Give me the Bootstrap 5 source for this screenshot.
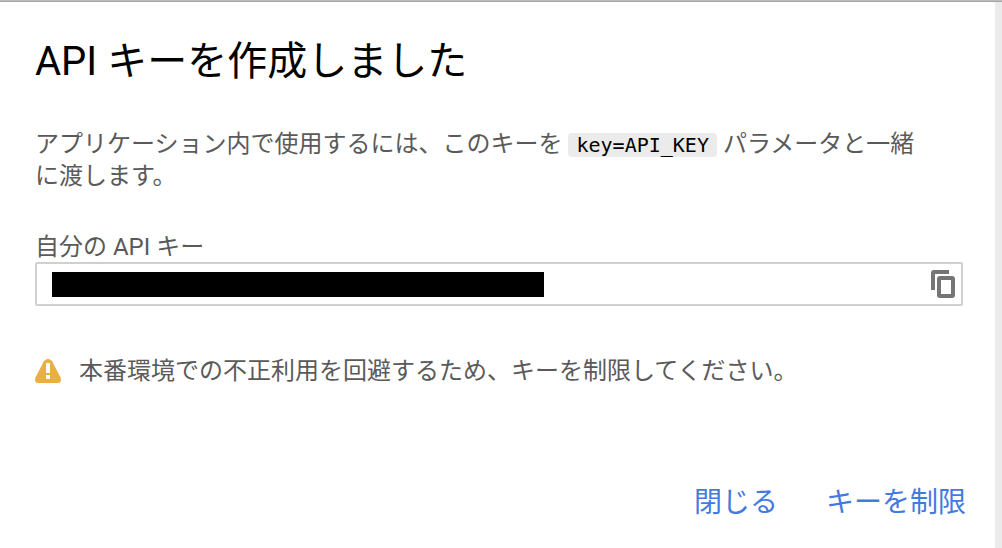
<!DOCTYPE html>
<html lang="ja">
<head>
<meta charset="utf-8">
<meta name="viewport" content="width=device-width, initial-scale=1">
<title>API キーを作成しました</title>
<link href="https://cdn.jsdelivr.net/npm/bootstrap@5.3.0/dist/css/bootstrap.min.css" rel="stylesheet">
<style>
  body { font-family: Roboto, "Noto Sans CJK JP", sans-serif; font-size: 24px; line-height: 32px; color: #5a5a5a; background: #ebebeb; }
  .dialog-page { background: #fff; margin-right: 7px; padding: 36px 29px 24px 35px; }
  .top-rule { height: 2px; background: linear-gradient(#bcbcbc 50%, #a6a6a6 50%); }
  .dialog-title { font-size: 40px; line-height: 48px; font-weight: 400; color: #000; margin-bottom: 42px; }
  .intro { padding-right: 32px; margin-bottom: 40px; }
  .intro code { font-family: "DejaVu Sans Mono", monospace; font-size: 20px; line-height: 24px; color: #000; background: #ebebeb; border-radius: 4px; padding: 0 8px; display: inline-block; }
  .key-label { line-height: 30px; }
  .key-box { border: 2px solid #d0d0d0; border-radius: 2px; height: 44px; padding: 0 4px 0 15px; margin-right: 3px; }
  .key-input { width: 492px; height: 25px; background: #000; color: #000; border-radius: 0; }
  .notice { margin-top: 49px; gap: 18px; }
  .actions { margin-top: 96px; gap: 48px; }
  .actions .btn { font-size: 28px; line-height: 40px; color: #4479e0; }
  .actions .btn:hover { color: #2a5bbf; }
</style>
</head>
<body class="min-vh-100 d-flex flex-column">
<div class="top-rule"></div>
<main class="dialog-page flex-grow-1 d-flex flex-column">
  <h1 class="dialog-title">API キーを作成しました</h1>
  <p class="intro">アプリケーション内で使用するには、このキーを <code>key=API_KEY</code> パラメータと一緒に渡します。</p>
  <label class="key-label" for="api-key">自分の API キー</label>
  <div class="key-box d-flex align-items-center justify-content-between">
    <input id="api-key" class="key-input border-0 p-0" type="text" readonly>
    <button class="btn border-0 p-0 d-flex" type="button" aria-label="コピー">
      <svg width="28" height="32" viewBox="0 0 28 32" fill="none" stroke="#757575" stroke-width="4" aria-hidden="true">
        <path d="M4 22V5a1 1 0 0 1 1-1h15"/>
        <rect x="10" y="10" width="14" height="18" rx="1"/>
      </svg>
    </button>
  </div>
  <div class="notice d-flex align-items-center">
    <svg class="flex-shrink-0" width="26" height="24" viewBox="0 0 26 24" aria-hidden="true">
      <path fill="#e8b040" d="M9 2Q13-2 17 2L25.500 18.500Q27 24 23 24H3Q-1 24 .5 18.500Z"/>
      <path fill="#fff" d="M11 4h4v10h-4zM11 16h4v4h-4z"/>
    </svg>
    <span>本番環境での不正利用を回避するため、キーを制限してください。</span>
  </div>
  <div class="actions d-flex justify-content-end">
    <button class="btn border-0 p-0" type="button">閉じる</button>
    <button class="btn border-0 p-0" type="button">キーを制限</button>
  </div>
</main>
<script src="https://cdn.jsdelivr.net/npm/bootstrap@5.3.0/dist/js/bootstrap.bundle.min.js"></script>
</body>
</html>
